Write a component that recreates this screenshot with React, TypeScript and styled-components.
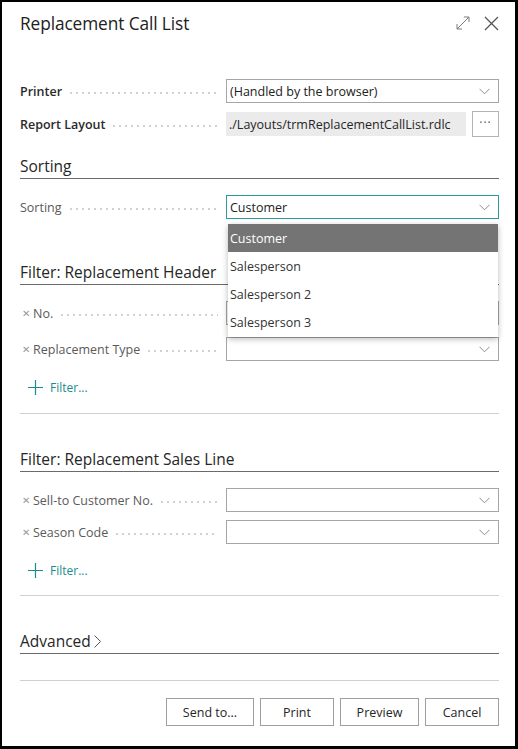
import React from "react";
import styled, { createGlobalStyle } from "styled-components";

const Global = createGlobalStyle`
  html, body { margin: 0; padding: 0; background: #000; }
  body { font-family: "Open Sans", "Noto Sans", sans-serif; }
  * { box-sizing: border-box; }
`;

const Frame = styled.div`
  width: 518px;
  height: 749px;
  border-style: solid;
  border-color: #000;
  border-width: 2px 3px 3px 2px;
  background: #fff;
  padding: 0 16px 0 18px;
  display: flex;
  flex-direction: column;
`;

const Header = styled.div`
  display: flex;
  align-items: center;
  height: 42px;
`;

const Title = styled.h1`
  margin: 0;
  flex: 1;
  font-size: 17.3px;
  font-weight: 400;
  color: #212121;
  letter-spacing: -0.1px;
`;

const IconBtn = styled.span<{ $ml?: number }>`
  display: inline-flex;
  margin-left: ${(p) => p.$ml ?? 0}px;
  color: #6a6a6a;
`;

const Rows = styled.div<{ $mt: number; $gap: number }>`
  display: flex;
  flex-direction: column;
  gap: ${(p) => p.$gap}px;
  margin-top: ${(p) => p.$mt}px;
`;

const Row = styled.div`
  display: grid;
  grid-template-columns: 206px 1fr;
  align-items: center;
  height: 24px;
`;

const Label = styled.div<{ $strong?: boolean }>`
  display: flex;
  align-items: center;
  font-size: 12.5px;
  color: ${(p) => (p.$strong ? "#2b2b2b" : "#5a5a5a")};
  font-weight: ${(p) => (p.$strong ? 600 : 400)};
  padding-right: 8px;
  white-space: nowrap;
  &::after {
    content: "";
    flex: 1;
    height: 2px;
    margin: 4px 0 0 6px;
    background-image: radial-gradient(circle, #cfcfcf 0.7px, transparent 0.9px);
    background-size: 6px 2px;
    background-repeat: repeat-x;
  }
`;

const ClearX = styled.span`
  font-size: 10px;
  color: #999;
  margin: 0 3px 0 2px;
`;

const FieldWrap = styled.div`
  position: relative;
  height: 24px;
`;

const SelectBox = styled.div<{ $focus?: boolean }>`
  height: 24px;
  border: 1px solid ${(p) => (p.$focus ? "#2b9a9a" : "#a6a6a6")};
  display: flex;
  align-items: center;
  padding: 0 8px 0 3px;
  font-size: 12.5px;
  color: #212121;
  background: #fff;
  span { flex: 1; }
`;

const ReadBox = styled.div`
  height: 24px;
  background: #ebebeb;
  display: flex;
  align-items: center;
  padding: 0 3px;
  font-size: 12.5px;
  color: #262626;
  flex: 1;
`;

const LayoutField = styled.div`
  display: flex;
  gap: 6px;
  align-items: center;
`;

const DotsBtn = styled.div`
  width: 27px;
  height: 26px;
  border: 1px solid #b3b3b3;
  display: flex;
  align-items: center;
  justify-content: center;
  color: #555;
  font-size: 12px;
  letter-spacing: 1px;
  padding-bottom: 4px;
`;

const Heading = styled.div<{ $mt: number }>`
  margin-top: ${(p) => p.$mt}px;
  font-size: 15.5px;
  color: #262626;
  line-height: 22px;
  padding-bottom: 1px;
  border-bottom: 1px solid #6a6a6a;
  display: flex;
  align-items: center;
  gap: 3px;
`;

const Separator = styled.div<{ $mt: number }>`
  margin-top: ${(p) => p.$mt}px;
  border-top: 1px solid #d0d0d0;
`;

const AddFilter = styled.div<{ $mt: number }>`
  margin-top: ${(p) => p.$mt}px;
  display: flex;
  align-items: center;
  gap: 7px;
  padding-left: 8px;
  height: 20px;
  color: #1c8a8e;
  font-size: 12px;
`;

const Menu = styled.div`
  position: absolute;
  left: 2px;
  right: 1px;
  top: 29px;
  background: #fff;
  box-shadow: 0 2px 6px rgba(0, 0, 0, 0.28);
  z-index: 5;
  padding-bottom: 1px;
`;

const MenuItem = styled.div<{ $active?: boolean }>`
  height: 28px;
  display: flex;
  align-items: center;
  padding-left: 2px;
  font-size: 12.5px;
  background: ${(p) => (p.$active ? "#747474" : "#fff")};
  color: ${(p) => (p.$active ? "#fff" : "#333")};
`;

const Footer = styled.div`
  margin-top: 17px;
  display: flex;
  justify-content: flex-end;
  gap: 6px;
`;

const Button = styled.button<{ $w: number }>`
  width: ${(p) => p.$w}px;
  height: 28px;
  background: #fff;
  border: 1px solid #9f9f9f;
  font-family: inherit;
  font-size: 12.5px;
  color: #262626;
  padding: 0;
`;

const Chevron = () => (
  <svg width="11" height="7" viewBox="0 0 11 7" fill="none">
    <path d="M0.5 0.8 L5.5 5.8 L10.5 0.8" stroke="#8c8c8c" strokeWidth="1" />
  </svg>
);

const Plus = () => (
  <svg width="15" height="15" viewBox="0 0 15 15" fill="none">
    <path d="M7.5 0 V15 M0 7.5 H15" stroke="#1c8a8e" strokeWidth="1.2" />
  </svg>
);

const ExpandIcon = () => (
  <svg width="14" height="14" viewBox="0 0 14 14" fill="none" stroke="#7a7a7a" strokeWidth="1">
    <path d="M1 13 L13 1" />
    <path d="M8 1 H13 V6" />
    <path d="M1 8 V13 H6" />
  </svg>
);

const CloseIcon = () => (
  <svg width="15" height="15" viewBox="0 0 15 15" fill="none" stroke="#555" strokeWidth="1.3">
    <path d="M1 1 L14 14 M14 1 L1 14" />
  </svg>
);

const Select = ({ value, focus }: { value?: string; focus?: boolean }) => (
  <SelectBox $focus={focus}>
    <span>{value}</span>
    <Chevron />
  </SelectBox>
);

const FilterLabel = ({ text }: { text: string }) => (
  <Label>
    <ClearX>✕</ClearX>
    {text}
  </Label>
);

export default function App() {
  return (
    <>
      <Global />
      <Frame>
        <Header>
          <Title>Replacement Call List</Title>
          <IconBtn><ExpandIcon /></IconBtn>
          <IconBtn $ml={14}><CloseIcon /></IconBtn>
        </Header>

        <Rows $mt={35} $gap={8}>
          <Row>
            <Label $strong>Printer</Label>
            <Select value="(Handled by the browser)" />
          </Row>
          <Row>
            <Label $strong>Report Layout</Label>
            <LayoutField>
              <ReadBox>./Layouts/trmReplacementCallList.rdlc</ReadBox>
              <DotsBtn>···</DotsBtn>
            </LayoutField>
          </Row>
        </Rows>

        <Heading $mt={20}>Sorting</Heading>
        <Rows $mt={16} $gap={0}>
          <Row>
            <Label>Sorting</Label>
            <FieldWrap>
              <Select value="Customer" focus />
              <Menu>
                <MenuItem $active>Customer</MenuItem>
                <MenuItem>Salesperson</MenuItem>
                <MenuItem>Salesperson 2</MenuItem>
                <MenuItem>Salesperson 3</MenuItem>
              </Menu>
            </FieldWrap>
          </Row>
        </Rows>

        <Heading $mt={42}>Filter: Replacement Header</Heading>
        <Rows $mt={16} $gap={12}>
          <Row>
            <FilterLabel text="No." />
            <Select />
          </Row>
          <Row>
            <FilterLabel text="Replacement Type" />
            <Select />
          </Row>
        </Rows>
        <AddFilter $mt={16}>
          <Plus />
          Filter...
        </AddFilter>
        <Separator $mt={16} />

        <Heading $mt={34}>Filter: Replacement Sales Line</Heading>
        <Rows $mt={16} $gap={8}>
          <Row>
            <FilterLabel text="Sell-to Customer No." />
            <Select />
          </Row>
          <Row>
            <FilterLabel text="Season Code" />
            <Select />
          </Row>
        </Rows>
        <AddFilter $mt={16}>
          <Plus />
          Filter...
        </AddFilter>
        <Separator $mt={15} />

        <Heading $mt={34}>
          Advanced
          <svg width="7" height="13" viewBox="0 0 7 13" fill="none">
            <path d="M0.5 0.5 L6.5 6.5 L0.5 12.5" stroke="#555" strokeWidth="1" />
          </svg>
        </Heading>
        <Separator $mt={26} />

        <Footer>
          <Button $w={88}>Send to...</Button>
          <Button $w={74}>Print</Button>
          <Button $w={79}>Preview</Button>
          <Button $w={74}>Cancel</Button>
        </Footer>
      </Frame>
    </>
  );
}
